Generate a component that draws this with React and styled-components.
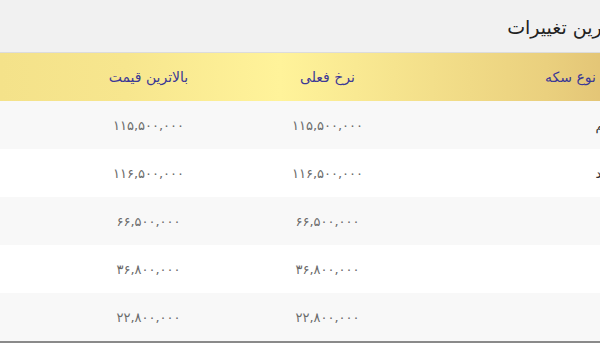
import React from "react";
import styled, { createGlobalStyle } from "styled-components";

const GlobalStyle = createGlobalStyle`
  html, body {
    margin: 0;
    padding: 0;
    background: #ffffff;
    overflow: hidden;
  }
`;

const Page = styled.div`
  width: 700px;
  direction: rtl;
  font-family: "DejaVu Sans", "Noto Sans", sans-serif;
`;

const TitleBar = styled.div`
  height: 50px;
  display: flex;
  align-items: center;
  padding-right: 80px;
  padding-top: 2px;
  background: #f1f1f1;
  border-bottom: 1px solid #dcdcdc;
`;

const Title = styled.h2`
  margin: 0;
  font-size: 19px;
  font-weight: normal;
  color: #222;
`;

const Row = styled.div`
  display: grid;
  grid-template-columns: 283px 179px 179px;
  padding-left: 59px;
  height: 48px;
  align-items: center;
  background: ${(p) =>
    p.$head
      ? "linear-gradient(to left, #d8b369 0%, #ead07e 22%, #fff39a 60%, #f7e68e 82%, #f4e28a 100%)"
      : p.$odd
      ? "#f8f8f8"
      : "#ffffff"};
`;

const HeadCell = styled.div`
  font-size: 14px;
  color: #3b3896;
  text-align: ${(p) => (p.$first ? "right" : "center")};
  padding-right: ${(p) => (p.$first ? "104px" : "0")};
`;

const NameCell = styled.div`
  font-size: 13px;
  color: #333;
  text-align: right;
  padding-right: 20px;
  white-space: nowrap;
`;

const NumCell = styled.div`
  font-size: 13px;
  color: #6b6b6b;
  text-align: center;
  letter-spacing: 0.3px;
`;

const BottomLine = styled.div`
  height: 2px;
  background: #8a8a8a;
  border-bottom: 2px solid #d6d6d6;
`;

const rows = [
  { name: "سکه طرح قدیم", now: "۱۱۵,۵۰۰,۰۰۰", high: "۱۱۵,۵۰۰,۰۰۰" },
  { name: "سکه طرح جدید", now: "۱۱۶,۵۰۰,۰۰۰", high: "۱۱۶,۵۰۰,۰۰۰" },
  { name: "نیم سکه", now: "۶۶,۵۰۰,۰۰۰", high: "۶۶,۵۰۰,۰۰۰" },
  { name: "ربع سکه", now: "۳۶,۸۰۰,۰۰۰", high: "۳۶,۸۰۰,۰۰۰" },
  { name: "سکه گرمی", now: "۲۲,۸۰۰,۰۰۰", high: "۲۲,۸۰۰,۰۰۰" },
];

export default function App() {
  return (
    <Page>
      <GlobalStyle />
      <TitleBar>
        <Title>آخرین تغییرات</Title>
      </TitleBar>
      <Row $head>
        <HeadCell $first>نوع سکه</HeadCell>
        <HeadCell>نرخ فعلی</HeadCell>
        <HeadCell>بالاترین قیمت</HeadCell>
      </Row>
      {rows.map((r, i) => (
        <Row key={r.name} $odd={i % 2 === 0}>
          <NameCell>{r.name}</NameCell>
          <NumCell>{r.now}</NumCell>
          <NumCell>{r.high}</NumCell>
        </Row>
      ))}
      <BottomLine />
    </Page>
  );
}
